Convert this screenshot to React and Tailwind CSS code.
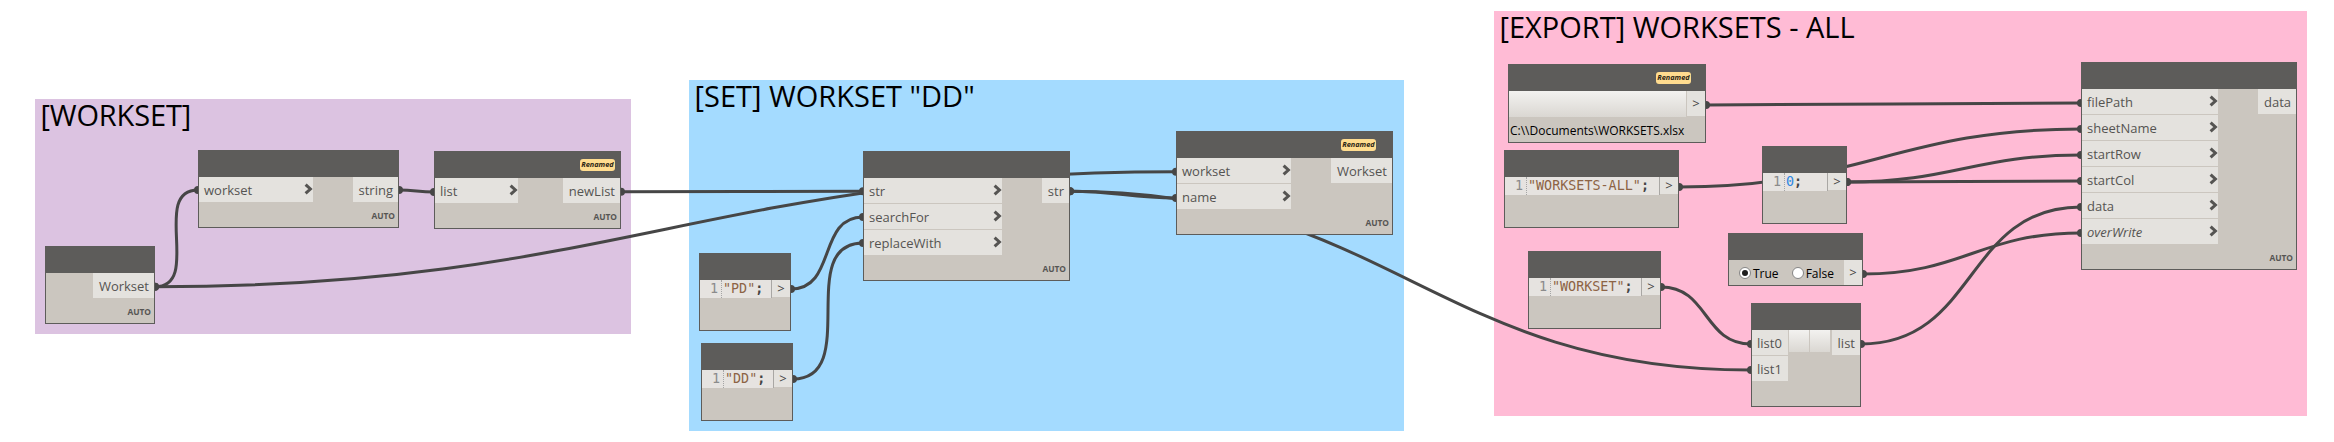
import React from "react";
import clsx from "clsx";

const GROUPS = [
  { title: "[WORKSET]", box: "left-[35px] top-[99px] w-[596px] h-[235px] bg-[#dcc3e1]", text: "tracking-[-0.15px]" },
  { title: '[SET] WORKSET "DD"', box: "left-[689px] top-[80px] w-[715px] h-[351px] bg-[#a4dbff]", text: "" },
  { title: "[EXPORT] WORKSETS - ALL", box: "left-[1494px] top-[11px] w-[813px] h-[405px] bg-[#ffbbd5]", text: "" },
];

// Each wire runs [x1, y1] -> [x2, y2] between an output port and an input port.
const WIRES = [
  [155, 286.7, 198, 190],
  [155, 286.7, 1176, 171.7],
  [399, 190, 434, 192],
  [621, 191.8, 863, 191.2],
  [791, 289, 863, 217],
  [793, 379, 863, 243],
  [1070, 191.2, 1176, 198],
  [1070, 191.2, 1751, 370],
  [1706, 105, 2081, 103],
  [1679, 187, 2081, 129],
  [1847, 182, 2081, 155],
  [1847, 182, 2081, 181],
  [1861, 344, 2081, 207],
  [1863, 274, 2081, 233],
  [1661, 287, 1751, 344],
];

function wirePath([x1, y1, x2, y2]) {
  const offset = 0.45 * Math.hypot(x2 - x1, y2 - y1);
  return `M${x1} ${y1}C${x1 + offset} ${y1} ${x2 - offset} ${y2} ${x2} ${y2}`;
}

function Wires() {
  return (
    <svg className="absolute inset-0" width="2334" height="442" fill="none">
      {WIRES.map((w, i) => (
        <g key={i}>
          <path d={wirePath(w)} stroke="#464646" strokeWidth="3" />
          <circle cx={w[0]} cy={w[1]} r="4" fill="#464646" />
          <circle cx={w[2]} cy={w[3]} r="4" fill="#464646" />
        </g>
      ))}
    </svg>
  );
}

function Group({ title, box, text }) {
  return (
    <section className={clsx("absolute pl-[5.5px]", box)}>
      <h2 className={clsx("text-[29px] leading-[32px] whitespace-pre text-black", text)}>{title}</h2>
    </section>
  );
}

function Node({ box, badge, auto, children }) {
  return (
    <article className={clsx("absolute flex flex-col border border-[#5d5c5a] bg-[#cbc6bf]", box)}>
      <header className={clsx("flex h-[26px] shrink-0 justify-end bg-[#5d5c5a] pt-[7px]", badge)}>
        {badge && (
          <span className="flex h-[12px] w-[35px] items-center justify-center rounded-[3px] bg-[#ffdc8f] text-[7.3px] leading-none font-bold text-[#2b2414] italic">
            Renamed
          </span>
        )}
      </header>
      <div className="flex items-start justify-between">{children}</div>
      {auto && (
        <footer className="mt-auto pr-[3px] pb-[5px] text-right text-[8.4px] leading-[12px] font-bold text-[#565553]">AUTO</footer>
      )}
    </article>
  );
}

function Chevron() {
  return (
    <svg width="9" height="12" viewBox="0 0 9 12" fill="none" className="mb-[2px]">
      <path d="M1.6 1.6L6.4 6L1.6 10.4" stroke="#555452" strokeWidth="3" />
    </svg>
  );
}

function Inputs({ ports, width, plain, italic }) {
  return (
    <ul className={clsx("flex flex-col gap-px", width)}>
      {ports.map((p) => (
        <li
          key={p}
          className={clsx(
            "flex h-[25px] items-center justify-between bg-[#e4e2de] pt-px pl-[5px] text-[13px] leading-[24px] text-[#555452]",
            p === italic && "italic"
          )}
        >
          <span>{p}</span>
          {!plain && <Chevron />}
        </li>
      ))}
    </ul>
  );
}

function Output({ label }) {
  return (
    <div className="h-[25px] bg-[#e4e2de] pt-px pr-[5px] pl-[6px] text-[13px] leading-[24px] text-[#555452]">{label}</div>
  );
}

function Arrow({ height }) {
  return (
    <div className={clsx("flex w-[18px] items-center justify-center bg-[#e4e2de] text-[13px] leading-none text-[#444]", height)}>
      &gt;
    </div>
  );
}

function CodeNode({ box, value, color }) {
  return (
    <Node box={box}>
      <div className="flex h-[18px] flex-1 border-r border-[#a9a7a4] bg-[#e6e3e0] pl-[10px] font-['DejaVu_Sans_Mono',monospace] text-[13.4px] leading-[17px]">
        <span className="w-[11px] text-[#8b8b8b]">1</span>
        <span className="h-[18px] border-l border-dotted border-[#a5a5a5] pl-px whitespace-pre">
          <span className={color}>{value}</span>
          <span className="font-bold text-[#444]">;</span>
        </span>
      </div>
      <Arrow height="h-[17px]" />
    </Node>
  );
}

function Radio({ label, checked }) {
  return (
    <label className="flex items-center gap-[2px]">
      <span className="flex size-[12px] items-center justify-center rounded-full border border-[#858585] bg-white">
        {checked && <span className="size-[6px] rounded-full bg-[#1f1f1f]" />}
      </span>
      <span className="pt-[2px]">{label}</span>
    </label>
  );
}

const BUTTON = "bg-linear-to-b from-[#f3f2f0] to-[#dad7d2]";

export default function App() {
  return (
    <main className="relative h-[442px] w-[2334px] overflow-hidden bg-white font-['Open_Sans',sans-serif]">
      {GROUPS.map((g) => (
        <Group key={g.title} {...g} />
      ))}
      <Wires />

      <Node box="left-[45px] top-[246px] w-[110px] h-[78px]" auto>
        <span />
        <Output label="Workset" />
      </Node>
      <Node box="left-[198px] top-[150px] w-[201px] h-[78px]" auto>
        <Inputs ports={["workset"]} width="w-[114px]" />
        <Output label="string" />
      </Node>
      <Node box="left-[434px] top-[151px] w-[187px] h-[78px]" badge="pr-[5px]" auto>
        <Inputs ports={["list"]} width="w-[83px]" />
        <Output label="newList" />
      </Node>

      <Node box="left-[863px] top-[151px] w-[207px] h-[130px]" auto>
        <Inputs ports={["str", "searchFor", "replaceWith"]} width="w-[138px]" />
        <Output label="str" />
      </Node>
      <CodeNode box="left-[699px] top-[253px] w-[92px] h-[78px]" value={'"PD"'} color="text-[#8d6345]" />
      <CodeNode box="left-[701px] top-[343px] w-[92px] h-[78px]" value={'"DD"'} color="text-[#8d6345]" />
      <Node box="left-[1176px] top-[131px] w-[217px] h-[104px]" badge="pr-[16px]" auto>
        <Inputs ports={["workset", "name"]} width="w-[114px]" />
        <Output label="Workset" />
      </Node>

      <Node box="left-[1508px] top-[64px] w-[198px] h-[79px]" badge="pr-[14px]">
        <div className="flex flex-1 flex-col">
          <div className="flex gap-px">
            <div className={clsx("h-[26px] flex-1", BUTTON)} />
            <Arrow height="h-[25px]" />
          </div>
          <p className="pt-px pl-px text-[12px] leading-[25px] whitespace-pre text-black">{"C:\\\\Documents\\WORKSETS.xlsx"}</p>
        </div>
      </Node>
      <CodeNode box="left-[1504px] top-[150px] w-[175px] h-[78px]" value={'"WORKSETS-ALL"'} color="text-[#8d6345]" />
      <CodeNode box="left-[1762px] top-[146px] w-[85px] h-[78px]" value="0" color="text-[#2c86e2]" />
      <Node box="left-[1728px] top-[233px] w-[135px] h-[53px]">
        <div className="flex h-[25px] items-center gap-[13px] pl-[10px] text-[12px] leading-[22px] text-black">
          <Radio label="True" checked />
          <Radio label="False" />
        </div>
        <Arrow height="h-[25px]" />
      </Node>
      <CodeNode box="left-[1528px] top-[251px] w-[133px] h-[78px]" value={'"WORKSET"'} color="text-[#8d6345]" />
      <Node box="left-[1751px] top-[303px] w-[110px] h-[104px]">
        <Inputs ports={["list0", "list1"]} width="w-[36px]" plain />
        <div className={clsx("h-[22px] w-[20px]", BUTTON)} />
        <div className={clsx("h-[22px] w-[20px]", BUTTON)} />
        <Output label="list" />
      </Node>
      <Node box="left-[2081px] top-[62px] w-[216px] h-[208px]" auto>
        <Inputs
          ports={["filePath", "sheetName", "startRow", "startCol", "data", "overWrite"]}
          width="w-[136px]"
          italic="overWrite"
        />
        <Output label="data" />
      </Node>
    </main>
  );
}
